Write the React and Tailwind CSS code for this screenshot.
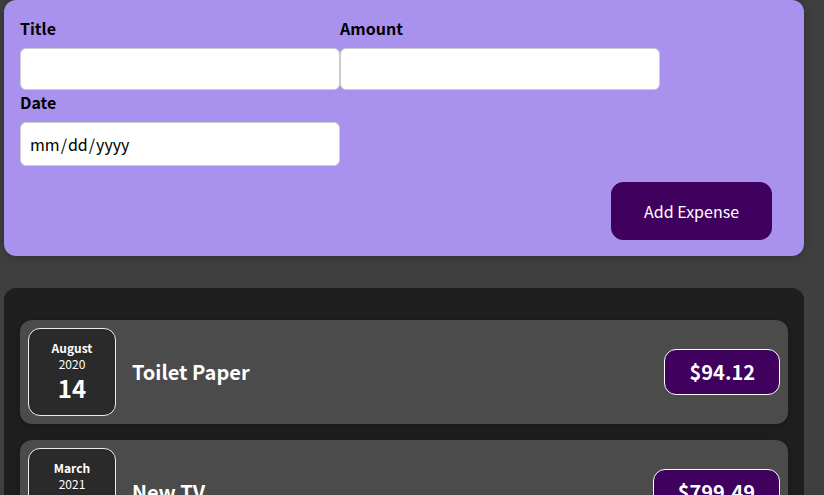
import React from "react";

const expenses = [
  { id: "e1", title: "Toilet Paper", amount: 94.12, month: "August", year: "2020", day: "14" },
  { id: "e2", title: "New TV", amount: 799.49, month: "March", year: "2021", day: "12" },
  { id: "e3", title: "Car Insurance", amount: 294.67, month: "February", year: "2021", day: "28" },
];

const ExpenseDate = ({ month, year, day }) => (
  <div className="flex flex-col items-center justify-center w-[88px] h-[88px] shrink-0 border border-[#ececec] bg-[#2a2a2a] text-white rounded-[12px]">
    <div className="text-xs font-bold">{month}</div>
    <div className="text-xs">{year}</div>
    <div className="text-2xl font-bold">{day}</div>
  </div>
);

const ExpenseItem = ({ expense }) => (
  <div className="flex items-center p-2 rounded-[12px] bg-[#4b4b4b] shadow-[0_2px_8px_rgba(0,0,0,0.25)]">
    <ExpenseDate month={expense.month} year={expense.year} day={expense.day} />
    <div className="flex flex-1 items-center">
      <h2 className="flex-1 mx-4 text-xl font-bold text-white">{expense.title}</h2>
      <div className="text-xl font-bold text-white bg-[#40005d] border border-white rounded-[12px] py-2 px-6">
        ${expense.amount}
      </div>
    </div>
  </div>
);

export default function App() {
  return (
    <div
      className="min-h-screen bg-[#3f3f3f] leading-[normal] pb-8"
      style={{ fontFamily: '"Noto Sans CJK JP", "Noto Sans", sans-serif' }}
    >
      {/* New expense form */}
      <div className="w-[800px] ml-1 p-4 rounded-[12px] bg-[#a892ee] shadow-[0_1px_8px_rgba(0,0,0,0.25)]">
        <form>
          <div className="flex flex-wrap mb-4 text-left">
            <div>
              <label className="block font-bold mb-2 text-black">Title</label>
              <input type="text" className="w-[320px] p-2 rounded-[6px] border border-[#ccc] bg-white" />
            </div>
            <div>
              <label className="block font-bold mb-2 text-black">Amount</label>
              <input type="number" className="w-[320px] p-2 rounded-[6px] border border-[#ccc] bg-white" />
            </div>
            <div>
              <label className="block font-bold mb-2 text-black">Date</label>
              <input
                type="date"
                className="w-[320px] px-2 py-[9px] rounded-[6px] border border-[#ccc] bg-white text-black [&::-webkit-calendar-picker-indicator]:hidden"
              />
            </div>
          </div>
          <div className="text-right">
            <button
              type="button"
              className="py-4 px-8 mr-4 border border-[#40005d] bg-[#40005d] text-white rounded-[12px]"
            >
              Add Expense
            </button>
          </div>
        </form>
      </div>

      {/* Expenses list */}
      <div className="w-[800px] ml-1 mt-8 pt-8 px-4 pb-4 rounded-[12px] bg-[#1f1f1f]">
        <div className="flex flex-col gap-4">
          {expenses.map((expense) => (
            <ExpenseItem key={expense.id} expense={expense} />
          ))}
        </div>
      </div>
    </div>
  );
}
